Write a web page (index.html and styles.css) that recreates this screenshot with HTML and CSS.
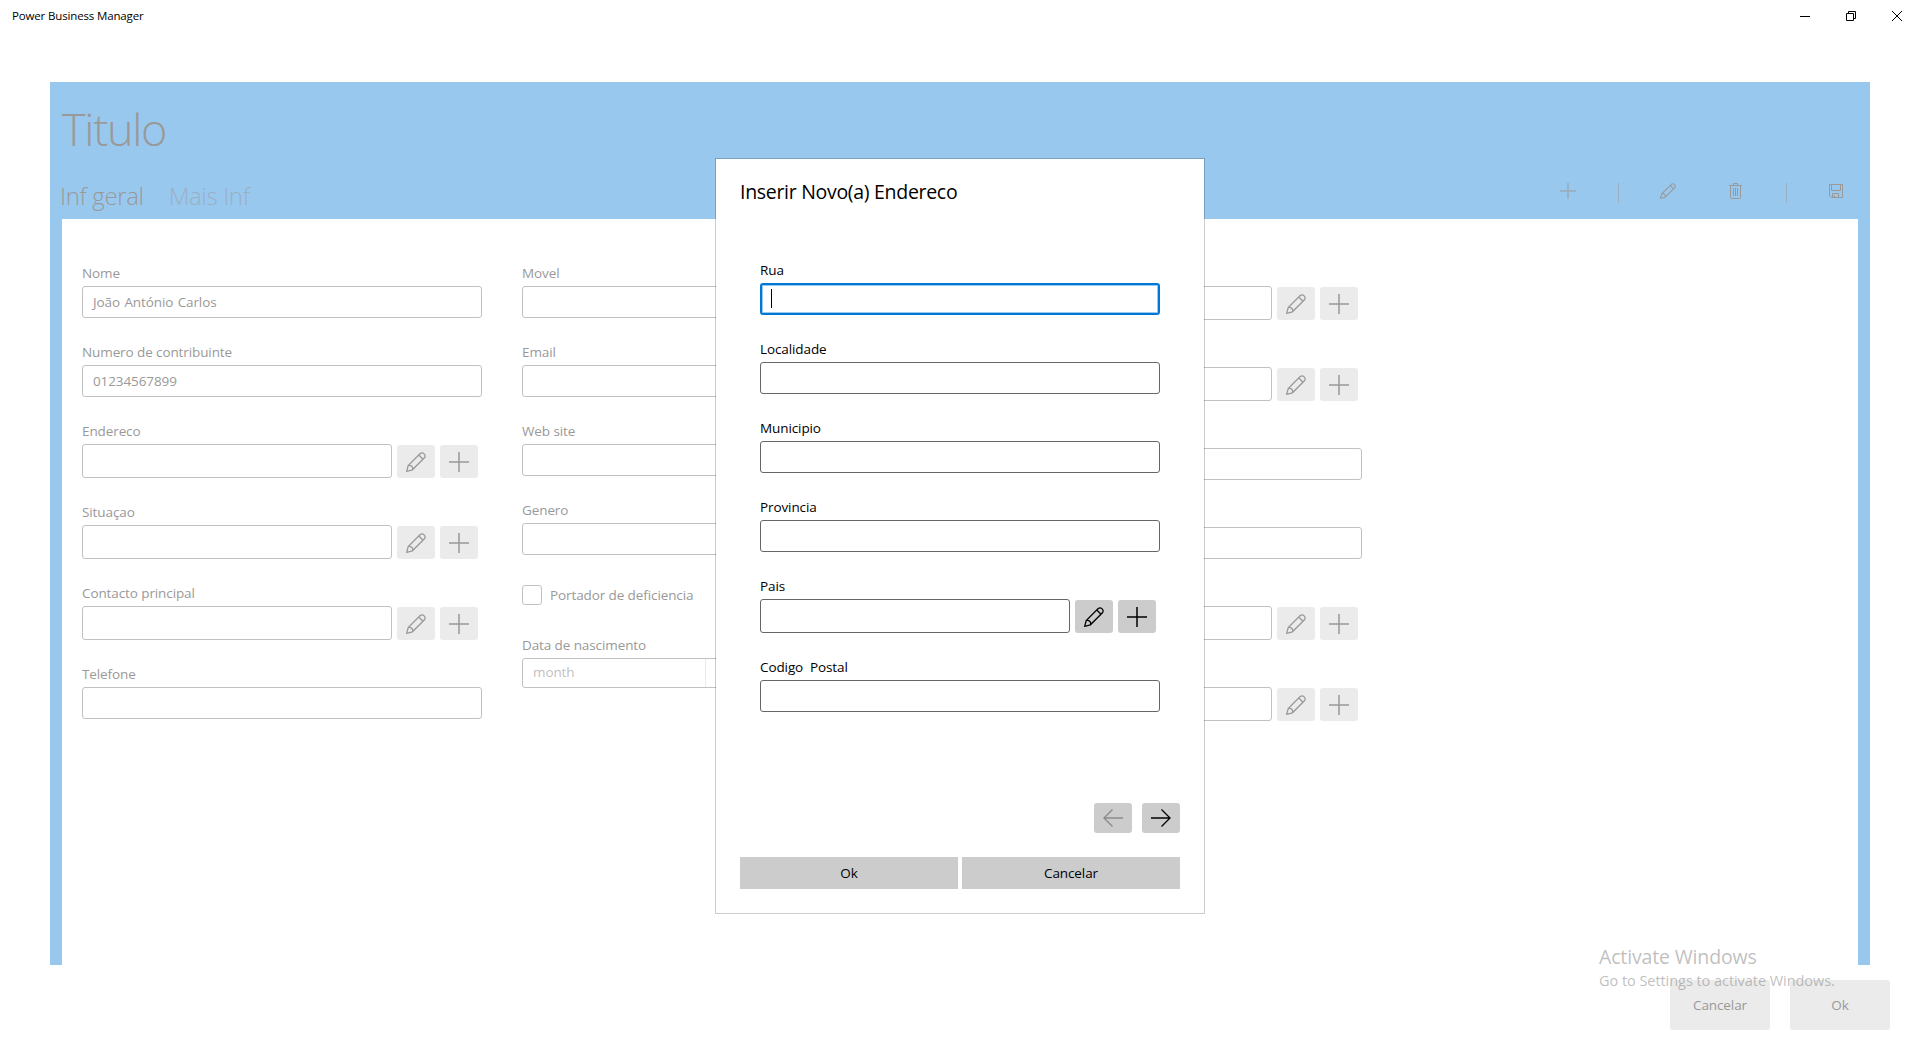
FILE: index.html
```html
<!DOCTYPE html>
<html lang="pt">
<head>
    <meta charset="UTF-8">
    <meta name="viewport" content="width=device-width, initial-scale=1.0">
    <title>Power Business Manager</title>
    <link rel="stylesheet" href="styles.css">
</head>
<body>
    <!-- Shared icons -->
    <svg class="icon-defs" width="0" height="0">
        <symbol id="icon-edit" viewBox="0 0 20 20">
            <path d="M.7 19.3 2.2 13.6 14.2 1.6A3 3 0 0 1 18.400 5.800L6.400 17.800ZM2.200 13.600a3.200 3.200 0 0 1 4.200 4.200M12.800 3 17 7.200" fill="none" stroke="currentColor" stroke-width="1.3"/>
        </symbol>
        <symbol id="icon-add" viewBox="0 0 20 20">
            <path d="M0 10H20M10 0V20" fill="none" stroke="currentColor" stroke-width="1.5"/>
        </symbol>
    </svg>

    <div class="titlebar">
        <span class="app-name">Power Business Manager</span>
        <div class="window-buttons">
            <svg width="10" height="10"><path d="M0 5.5H10" fill="none" stroke="#000"/></svg>
            <svg width="10" height="10"><path d="M.5 2.5H7.5V9.5H.5ZM2.5 2.5V.5H9.5V7.5H7.5" fill="none" stroke="#000"/></svg>
            <svg width="10" height="10"><path d="M0 0 10 10M10 0 0 10" fill="none" stroke="#000"/></svg>
        </div>
    </div>

    <div class="frame">
        <h1>Titulo</h1>
        <div class="header-row">
            <div class="tabs">
                <span class="tab">Inf geral</span>
                <span class="tab inactive">Mais Inf</span>
            </div>
            <div class="toolbar">
                <svg class="tool" width="16" height="16"><path d="M0 8H16M8 0V16" fill="none" stroke="currentColor" stroke-width="2" opacity=".5"/></svg>
                <span class="separator"></span>
                <svg class="tool" width="16" height="16"><use href="#icon-edit"/></svg>
                <svg class="tool" width="16" height="16"><path d="M1 2.5H14M5.5 2.5V.5H9.5V2.5M2.5 2.5V14.5Q2.5 15.5 3.5 15.5H11.5Q12.5 15.5 12.5 14.5V2.5M5.5 5V13M7.5 5V13M9.5 5V13" fill="none" stroke="currentColor"/></svg>
                <span class="separator"></span>
                <svg class="tool" width="16" height="16"><path d="M1.5 1.5H14.5V14.5H3L1.5 13ZM3.5 1.5V7.5H12.5V1.5M4.5 14.5V10.5H10.5V14.5M6.5 12V14.5" fill="none" stroke="currentColor"/></svg>
            </div>
        </div>

        <div class="panel">
            <div class="column">
                <div class="field">
                    <label>Nome</label>
                    <div class="textbox">João António Carlos</div>
                </div>
                <div class="field">
                    <label>Numero de contribuinte</label>
                    <div class="textbox">01234567899</div>
                </div>
                <div class="field">
                    <label>Endereco</label>
                    <div class="lookup">
                        <div class="textbox"></div>
                        <button><svg width="20" height="20"><use href="#icon-edit"/></svg></button>
                        <button><svg width="20" height="20"><use href="#icon-add"/></svg></button>
                    </div>
                </div>
                <div class="field">
                    <label>Situaçao</label>
                    <div class="lookup">
                        <div class="textbox"></div>
                        <button><svg width="20" height="20"><use href="#icon-edit"/></svg></button>
                        <button><svg width="20" height="20"><use href="#icon-add"/></svg></button>
                    </div>
                </div>
                <div class="field">
                    <label>Contacto principal</label>
                    <div class="lookup">
                        <div class="textbox"></div>
                        <button><svg width="20" height="20"><use href="#icon-edit"/></svg></button>
                        <button><svg width="20" height="20"><use href="#icon-add"/></svg></button>
                    </div>
                </div>
                <div class="field">
                    <label>Telefone</label>
                    <div class="textbox"></div>
                </div>
            </div>

            <div class="column">
                <div class="field">
                    <label>Movel</label>
                    <div class="textbox"></div>
                </div>
                <div class="field">
                    <label>Email</label>
                    <div class="textbox"></div>
                </div>
                <div class="field">
                    <label>Web site</label>
                    <div class="textbox"></div>
                </div>
                <div class="field">
                    <label>Genero</label>
                    <div class="textbox"></div>
                </div>
                <div class="check">
                    <span class="box"></span>
                    <span>Portador de deficiencia</span>
                </div>
                <div class="field">
                    <label>Data de nascimento</label>
                    <div class="datebox">
                        <span class="month">month</span>
                    </div>
                </div>
            </div>

            <div class="column">
                <div class="field">
                    <label></label>
                    <div class="lookup">
                        <div class="textbox"></div>
                        <button><svg width="20" height="20"><use href="#icon-edit"/></svg></button>
                        <button><svg width="20" height="20"><use href="#icon-add"/></svg></button>
                    </div>
                </div>
                <div class="field">
                    <label></label>
                    <div class="lookup">
                        <div class="textbox"></div>
                        <button><svg width="20" height="20"><use href="#icon-edit"/></svg></button>
                        <button><svg width="20" height="20"><use href="#icon-add"/></svg></button>
                    </div>
                </div>
                <div class="field">
                    <label></label>
                    <div class="textbox"></div>
                </div>
                <div class="field">
                    <label></label>
                    <div class="textbox"></div>
                </div>
                <div class="field">
                    <label></label>
                    <div class="lookup">
                        <div class="textbox"></div>
                        <button><svg width="20" height="20"><use href="#icon-edit"/></svg></button>
                        <button><svg width="20" height="20"><use href="#icon-add"/></svg></button>
                    </div>
                </div>
                <div class="field">
                    <label></label>
                    <div class="lookup">
                        <div class="textbox"></div>
                        <button><svg width="20" height="20"><use href="#icon-edit"/></svg></button>
                        <button><svg width="20" height="20"><use href="#icon-add"/></svg></button>
                    </div>
                </div>
            </div>
        </div>
    </div>

    <div class="footer">
        <button class="footer-button">Cancelar</button>
        <button class="footer-button">Ok</button>
    </div>

    <!-- Dialog -->
    <div class="dialog">
        <h2>Inserir Novo(a) Endereco</h2>
        <div class="dialog-form">
            <div class="field">
                <label>Rua</label>
                <div class="textbox focused"><span class="caret"></span></div>
            </div>
            <div class="field">
                <label>Localidade</label>
                <div class="textbox"></div>
            </div>
            <div class="field">
                <label>Municipio</label>
                <div class="textbox"></div>
            </div>
            <div class="field">
                <label>Provincia</label>
                <div class="textbox"></div>
            </div>
            <div class="field">
                <label>Pais</label>
                <div class="lookup">
                    <div class="textbox"></div>
                    <button><svg width="20" height="20"><use href="#icon-edit"/></svg></button>
                    <button><svg width="20" height="20"><use href="#icon-add"/></svg></button>
                </div>
            </div>
            <div class="field">
                <label>Codigo&nbsp; Postal</label>
                <div class="textbox"></div>
            </div>
        </div>
        <div class="pager">
            <button class="off"><svg width="20" height="20"><path d="M20 10H1M9.5 1.5 1 10 9.5 18.5" fill="none" stroke="currentColor" stroke-width="1.3"/></svg></button>
            <button><svg width="20" height="20"><path d="M0 10H19M10.5 1.5 19 10 10.5 18.5" fill="none" stroke="currentColor" stroke-width="1.3"/></svg></button>
        </div>
        <div class="dialog-actions">
            <button>Ok</button>
            <button>Cancelar</button>
        </div>
    </div>

    <div class="watermark">
        <div class="watermark-title">Activate Windows</div>
        <div class="watermark-text">Go to Settings to activate Windows.</div>
    </div>
</body>
</html>
```
FILE: styles.css
```css
* {
    box-sizing: border-box;
}
body {
    margin: 0;
    height: 1040px;
    position: relative;
    overflow: hidden;
    background-color: #fff;
    color: #999;
    font-family: "Open Sans", "Noto Sans", sans-serif;
    font-size: 13.5px;
    letter-spacing: -0.1px;
}
svg {
    display: block;
}
.icon-defs {
    position: absolute;
}
button {
    display: flex;
    justify-content: center;
    align-items: center;
    padding: 0;
    border: none;
    border-radius: 3px;
    background-color: #ebebeb;
    color: #999;
    font: inherit;
    letter-spacing: inherit;
}

/* Title bar */
.titlebar {
    display: flex;
    justify-content: space-between;
    height: 32px;
    padding: 0 18px 0 12px;
    color: #000;
}
.app-name {
    font-size: 11.5px;
    line-height: 32px;
    letter-spacing: -0.15px;
}
.window-buttons {
    display: flex;
    gap: 36px;
    padding-top: 11px;
}

/* Blue frame */
.frame {
    height: 883px;
    margin: 50px 50px 0;
    padding: 0 12px;
    background-color: #99c8ef;
}
h1 {
    height: 96px;
    margin: 0;
    padding-top: 16px;
    font-size: 45px;
    font-weight: 300;
    line-height: 62px;
    letter-spacing: -1.3px;
}
.header-row {
    display: flex;
    justify-content: space-between;
    height: 41px;
}
.tabs {
    display: flex;
    gap: 25px;
    margin-left: -2px;
    font-size: 24px;
    font-weight: 300;
    line-height: 36px;
    letter-spacing: -0.35px;
}
.inactive {
    opacity: 0.5;
}
.toolbar {
    display: flex;
    align-items: flex-start;
    gap: 52px;
    padding: 5px 14px 0 0;
}
.separator {
    width: 1px;
    height: 20px;
    margin: 0 -11px 0 -10px;
    background-color: #99aec2;
}

/* Form */
.panel {
    display: flex;
    gap: 40px;
    height: 746px;
    padding: 40px 20px 0;
    background-color: #fff;
}
.column {
    width: 400px;
}
.field {
    margin-bottom: 20px;
}
label {
    display: block;
    height: 27px;
    padding-top: 5px;
    line-height: 19px;
}
.textbox {
    height: 32px;
    padding: 0 10px;
    border: 1px solid #c1c1c1;
    border-radius: 3px;
    line-height: 31px;
    word-spacing: 1px;
}
.lookup {
    display: flex;
    align-items: flex-end;
    gap: 5px;
}
.lookup .textbox {
    width: 310px;
    height: 34px;
}
.lookup button {
    width: 38px;
    height: 33px;
}
.check {
    display: flex;
    align-items: center;
    gap: 8px;
    height: 20px;
    margin: 30px 0 26px;
}
.box {
    width: 20px;
    height: 20px;
    border: 1px solid #c1c1c1;
    border-radius: 3px;
}
.datebox {
    height: 30px;
    border: 1px solid #c1c1c1;
    border-radius: 3px;
}
.month {
    display: block;
    width: 183px;
    height: 28px;
    padding-left: 10px;
    border-right: 1px solid #ebebeb;
    color: #c1c1c1;
    line-height: 27px;
}

/* Bottom buttons */
.footer {
    display: flex;
    justify-content: flex-end;
    gap: 20px;
    padding: 15px 30px 0;
}
.footer-button {
    width: 100px;
    height: 50px;
}

/* Dialog */
.dialog {
    position: absolute;
    top: 158px;
    left: 715px;
    width: 490px;
    height: 756px;
    padding: 18px 24px 0;
    border: 1px solid rgba(0, 0, 0, 0.2);
    background-color: #fff;
    background-clip: padding-box;
    color: #000;
}
h2 {
    height: 79px;
    margin: 0;
    font-size: 19.5px;
    font-weight: 400;
    line-height: 30px;
    letter-spacing: -0.3px;
}
.dialog-form {
    width: 400px;
    height: 547px;
    margin-left: 20px;
}
.dialog .textbox {
    border-color: #666;
}
.dialog .focused {
    padding: 4px 8px;
    border: 2px solid #0078d7;
    box-shadow: inset 0 0 0 1px #99c9ef;
}
.caret {
    display: block;
    width: 1px;
    height: 19px;
    margin-left: 1px;
    background-color: #000;
}
.dialog button {
    background-color: #ccc;
    color: #000;
}
.pager {
    display: flex;
    justify-content: flex-end;
    gap: 10px;
}
.pager button {
    width: 38px;
    height: 30px;
}
.dialog .off {
    color: #8a8a8a;
}
.dialog-actions {
    display: flex;
    gap: 4px;
    margin-top: 24px;
}
.dialog-actions button {
    width: 218px;
    height: 32px;
    border-radius: 0;
}

/* Desktop watermark */
.watermark {
    position: absolute;
    top: 943px;
    left: 1599px;
    color: rgba(128, 128, 128, 0.5);
    white-space: nowrap;
}
.watermark-title {
    font-size: 19.5px;
    line-height: 28px;
    letter-spacing: -0.15px;
}
.watermark-text {
    font-size: 14.5px;
    line-height: 19px;
    letter-spacing: -0.05px;
}
```
